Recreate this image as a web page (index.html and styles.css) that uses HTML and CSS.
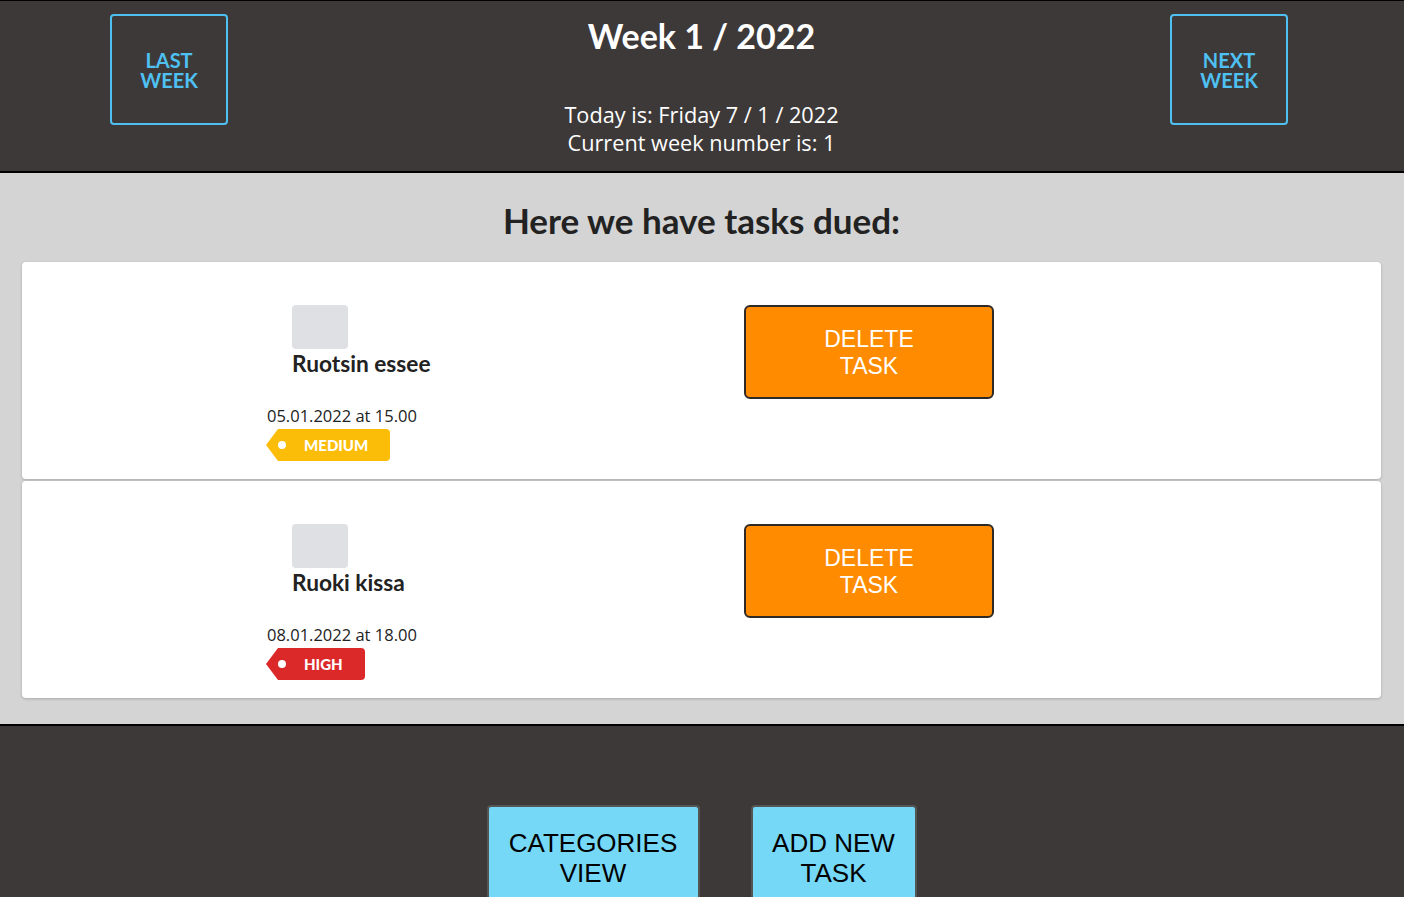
FILE: index.html
```html
<!DOCTYPE html>
<html>
<head>
<meta charset="utf-8">
<link rel="stylesheet" href="styles.css">
</head>
<body>
<header class="top">
  <button class="week-btn">LAST<br>WEEK</button>
  <div class="week-info">
    <h1 class="week-title">Week 1 / 2022</h1>
    <p class="today">Today is: Friday 7 / 1 / 2022<br>Current week number is: 1</p>
  </div>
  <button class="week-btn">NEXT<br>WEEK</button>
</header>
<main class="tasks">
  <h2 class="tasks-title">Here we have tasks dued:</h2>
  <div class="card">
    <div class="task-info">
      <div class="check"></div>
      <div class="task-name">Ruotsin essee</div>
      <div class="task-date">05.01.2022 at 15.00</div>
      <span class="tag tag-medium">MEDIUM</span>
    </div>
    <button class="delete-btn">DELETE<br>TASK</button>
  </div>
  <div class="card">
    <div class="task-info">
      <div class="check"></div>
      <div class="task-name">Ruoki kissa</div>
      <div class="task-date">08.01.2022 at 18.00</div>
      <span class="tag tag-high">HIGH</span>
    </div>
    <button class="delete-btn">DELETE<br>TASK</button>
  </div>
</main>
<footer class="bottom">
  <button class="nav-btn nav-cat">CATEGORIES<br>VIEW</button>
  <button class="nav-btn nav-add">ADD NEW<br>TASK</button>
</footer>
</body>
</html>
```
FILE: styles.css
```css
html, body {
  margin: 0;
  padding: 0;
  height: 897px;
  overflow: hidden;
}
body {
  font-family: "Open Sans", "Noto Sans", sans-serif;
  background: #3d3938;
}
.top {
  background: #3d3938;
  border-top: 1px solid #000;
  border-bottom: 2px solid #000;
  height: 170px;
  display: flex;
  justify-content: space-between;
  align-items: flex-start;
  padding: 0 116px 0 110px;
  box-sizing: content-box;
}
.week-btn {
  margin-top: 13px;
  width: 118px;
  height: 111px;
  background: transparent;
  border: 2px solid #4fc0f2;
  border-radius: 4px;
  color: #4fc0f2;
  font-family: Lato, sans-serif;
  font-weight: 700;
  font-size: 20px;
  line-height: 20px;
  padding: 0;
  box-sizing: border-box;
}
.week-info {
  text-align: center;
  color: #fff;
  flex: 1;
  padding-left: 5px;
}
.week-title {
  font-family: Lato, sans-serif;
  font-weight: 700;
  font-size: 34px;
  margin: 15px 0 0;
  line-height: 40px;
}
.today {
  margin: 45px 0 0;
  font-size: 21.7px;
  line-height: 28px;
}
.tasks {
  background: #d4d4d4;
  border-bottom: 2px solid #000;
  padding: 0 23px 26px 22px;
  display: flex;
  flex-direction: column;
  gap: 2px;
}
.tasks-title {
  margin: 0;
  text-align: center;
  font-family: Lato, sans-serif;
  font-weight: 700;
  font-size: 35px;
  color: #222;
  line-height: 40px;
  padding: 27px 0 20px;
}
.card {
  background: #fff;
  border-radius: 4px;
  box-shadow: 0 1px 3px rgba(0,0,0,0.2);
  height: 217px;
  box-sizing: border-box;
  display: flex;
  align-items: flex-start;
  padding: 43px 0 0 244px;
}
.task-info {
  width: 478px;
  display: flex;
  flex-direction: column;
  align-items: flex-start;
}
.check {
  width: 56px;
  height: 44px;
  background: #dee0e3;
  border-radius: 4px;
  margin-left: 26px;
}
.task-name {
  margin-left: 26px;
  margin-top: 1px;
  font-family: Lato, sans-serif;
  font-weight: 700;
  font-size: 22.7px;
  line-height: 28px;
  color: #222;
}
.task-date {
  margin-top: 27px;
  font-size: 16.5px;
  line-height: 22px;
  color: #222;
  margin-left: 1px;
}
.tag {
  position: relative;
  margin-top: 2px;
  margin-left: 12px;
  height: 32px;
  line-height: 32px;
  padding: 0 22px 0 26px;
  border-radius: 0 4px 4px 0;
  color: #fff;
  font-family: Lato, sans-serif;
  font-weight: 900;
  font-size: 15px;
}
.tag::before {
  content: "";
  position: absolute;
  left: -12px;
  top: 0;
  border-top: 16px solid transparent;
  border-bottom: 16px solid transparent;
  border-right: 12px solid currentColor;
}
.tag::after {
  content: "";
  position: absolute;
  left: 0;
  top: 12px;
  width: 8px;
  height: 8px;
  border-radius: 50%;
  background: #fff;
}
.tag-medium { background: #fbbd08; }
.tag-medium::before { border-right-color: #fbbd08; }
.tag-high { background: #db2828; padding-right: 22px; }
.tag-high::before { border-right-color: #db2828; }
.delete-btn {
  width: 250px;
  height: 94px;
  background: #ff8c00;
  border: 2px solid #2f2a26;
  border-radius: 6px;
  color: #fff;
  font-family: "Liberation Sans", Arial, sans-serif;
  font-size: 23px;
  line-height: 27px;
  padding: 2px 0 0;
}
.bottom {
  display: flex;
  justify-content: center;
  gap: 51px;
  padding-top: 79px;
  padding-right: 1px;
}
.nav-btn {
  background: #76d8f7;
  border: 2px solid #555;
  border-bottom: none;
  border-radius: 4px 4px 0 0;
  color: #000;
  font-family: "Liberation Sans", Arial, sans-serif;
  font-size: 26px;
  line-height: 30px;
  height: 120px;
  padding: 21px 0 0;
  box-sizing: border-box;
  display: flex;
  flex-direction: column;
  align-items: center;
  justify-content: flex-start;
}
.nav-cat { width: 213px; }
.nav-add { width: 166px; }
```
